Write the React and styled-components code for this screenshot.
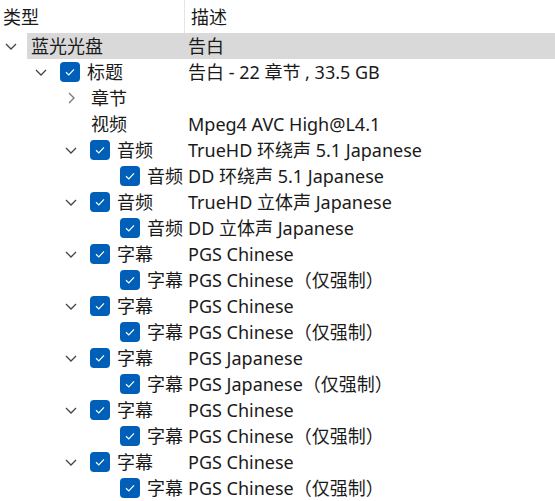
import React from 'react';
import styled, { createGlobalStyle } from 'styled-components';

const GlobalStyle = createGlobalStyle`
  html, body {
    margin: 0;
    padding: 0;
    background: #fff;
  }
  body {
    font-family: "Noto Sans", "Noto Sans CJK SC", sans-serif;
    font-size: 18px;
    color: #1a1a1a;
  }
`;

const rows = [
  { level: 0, expander: 'down', type: '蓝光光盘', desc: '告白', selected: true },
  { level: 1, expander: 'down', checked: true, type: '标题', desc: '告白 - 22 章节 , 33.5 GB' },
  { level: 2, expander: 'right', type: '章节', desc: '' },
  { level: 2, type: '视频', desc: 'Mpeg4 AVC High@L4.1' },
  { level: 2, expander: 'down', checked: true, type: '音频', desc: 'TrueHD 环绕声 5.1 Japanese' },
  { level: 3, checked: true, type: '音频', desc: 'DD 环绕声 5.1 Japanese' },
  { level: 2, expander: 'down', checked: true, type: '音频', desc: 'TrueHD 立体声 Japanese' },
  { level: 3, checked: true, type: '音频', desc: 'DD 立体声 Japanese' },
  { level: 2, expander: 'down', checked: true, type: '字幕', desc: 'PGS Chinese' },
  { level: 3, checked: true, type: '字幕', desc: 'PGS Chinese（仅强制）' },
  { level: 2, expander: 'down', checked: true, type: '字幕', desc: 'PGS Chinese' },
  { level: 3, checked: true, type: '字幕', desc: 'PGS Chinese（仅强制）' },
  { level: 2, expander: 'down', checked: true, type: '字幕', desc: 'PGS Japanese' },
  { level: 3, checked: true, type: '字幕', desc: 'PGS Japanese（仅强制）' },
  { level: 2, expander: 'down', checked: true, type: '字幕', desc: 'PGS Chinese' },
  { level: 3, checked: true, type: '字幕', desc: 'PGS Chinese（仅强制）' },
  { level: 2, expander: 'down', checked: true, type: '字幕', desc: 'PGS Chinese' },
  { level: 3, checked: true, type: '字幕', desc: 'PGS Chinese（仅强制）' },
];

const Chevron = ({ dir }) => (
  <svg width="14" height="14" viewBox="0 0 14 14" fill="none">
    {dir === 'down' ? (
      <path d="M2 5 L7 10 L12 5" stroke="#444" strokeWidth="1.3" />
    ) : (
      <path d="M5 2 L10 7 L5 12" stroke="#777" strokeWidth="1.3" />
    )}
  </svg>
);

const CheckBox = () => (
  <StyledCheck>
    <svg width="12" height="12" viewBox="0 0 12 12" fill="none">
      <path d="M2 6.3 L4.8 9 L10 3.4" stroke="#fff" strokeWidth="1.2" />
    </svg>
  </StyledCheck>
);

const App = () => {
  return (
    <>
      <GlobalStyle />
      <StyledTree>
        {/* Column headers */}
        <StyledHeader>
          <StyledHeadCell>类型</StyledHeadCell>
          <StyledHeadCell $last>描述</StyledHeadCell>
        </StyledHeader>

        {/* Rows */}
        {rows.map((row, i) => (
          <StyledRow key={i} $selected={row.selected}>
            <StyledTypeCell $level={row.level}>
              <StyledExpander>{row.expander && <Chevron dir={row.expander} />}</StyledExpander>
              {row.checked && <CheckBox />}
              <StyledLabel $checked={row.checked}>{row.type}</StyledLabel>
            </StyledTypeCell>
            <StyledDesc>{row.desc}</StyledDesc>
          </StyledRow>
        ))}
      </StyledTree>
    </>
  );
};

export default App;

const StyledTree = styled.div`
  width: 555px;
  height: 501px;
  overflow: hidden;
  background: #fff;
`;

const StyledHeader = styled.div`
  display: grid;
  grid-template-columns: 184px 1fr;
  height: 33px;
`;

const StyledHeadCell = styled.div`
  display: flex;
  align-items: center;
  padding-left: ${(p) => (p.$last ? '6px' : '3px')};
  border-left: ${(p) => (p.$last ? '1px solid #e5e5e5' : 'none')};
  line-height: 1;
`;

const StyledRow = styled.div`
  display: grid;
  grid-template-columns: 188px 1fr;
  height: 26px;
  background: ${(p) =>
    p.$selected ? 'linear-gradient(to right, transparent 27px, #d9d9d9 27px)' : 'transparent'};
`;

const StyledTypeCell = styled.div`
  display: flex;
  align-items: center;
  padding-left: ${(p) => p.$level * 30}px;
  white-space: nowrap;
  overflow: hidden;
`;

const StyledExpander = styled.div`
  width: 30px;
  flex: none;
  display: flex;
  align-items: center;
  padding-left: 4px;
  box-sizing: border-box;
`;

const StyledCheck = styled.div`
  width: 20px;
  height: 20px;
  flex: none;
  border-radius: 4px;
  background: #005fb8;
  display: flex;
  align-items: center;
  justify-content: center;
  margin-right: 7px;
`;

const StyledLabel = styled.span`
  padding-left: ${(p) => (p.$checked ? '0' : '1px')};
  line-height: 1;
`;

const StyledDesc = styled.div`
  display: flex;
  align-items: center;
  white-space: nowrap;
  line-height: 1;
`;
